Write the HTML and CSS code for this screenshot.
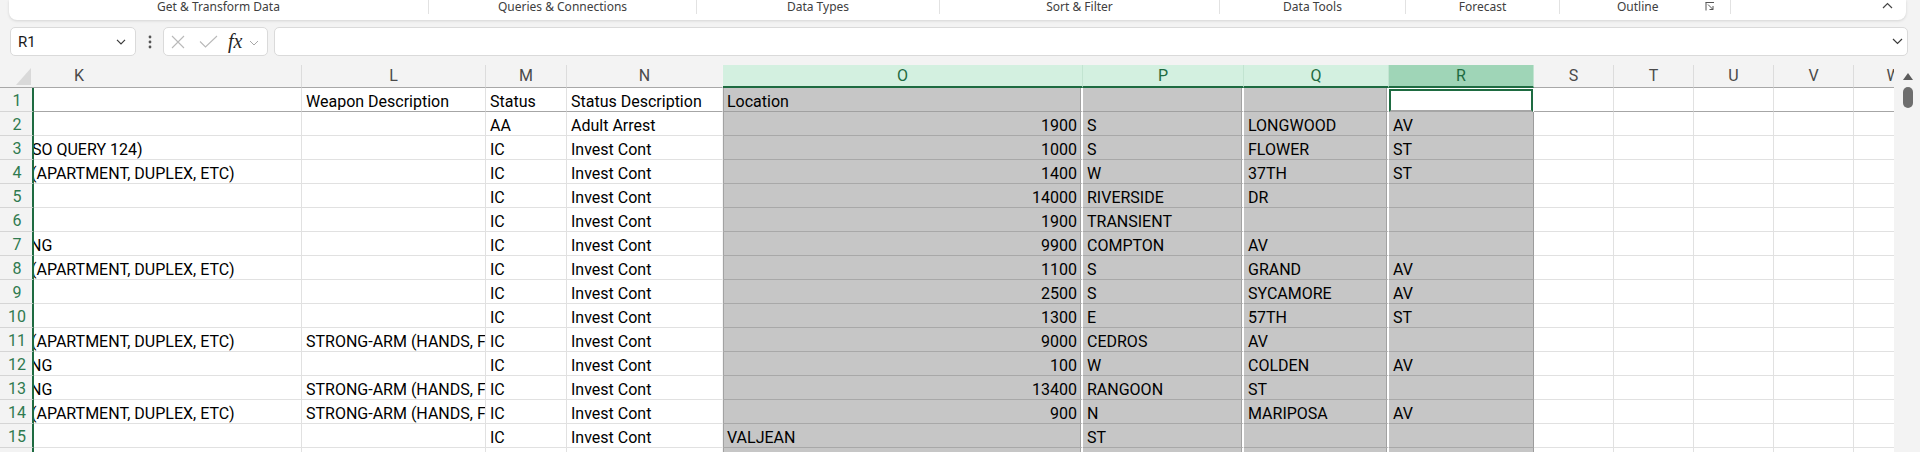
FILE: index.html
```html
<!DOCTYPE html>
<html>
<head>
<meta charset="utf-8">
<link rel="stylesheet" href="styles.css">
</head>
<body>
<div class="ribbon">
  <div class="grp g1">Get &amp; Transform Data</div><div class="sep"></div>
  <div class="grp g2">Queries &amp; Connections</div><div class="sep"></div>
  <div class="grp g3">Data Types</div><div class="sep"></div>
  <div class="grp g4">Sort &amp; Filter</div><div class="sep"></div>
  <div class="grp g5">Data Tools</div><div class="sep"></div>
  <div class="grp g6">Forecast</div><div class="sep"></div>
  <div class="grp g7"><span class="glabel">Outline</span>
    <svg class="launch" width="10" height="10" viewBox="0 0 10 10"><path d="M1 9.5V1.5M0.5 1.5H9M3 3.5L8 8.5M8 5V8.5H4.5" fill="none" stroke="#555" stroke-width="1"/></svg>
  </div><div class="sep"></div>
  <div class="grp g8"><svg width="11" height="7" viewBox="0 0 11 7"><path d="M1 6L5.5 1.5L10 6" fill="none" stroke="#444" stroke-width="1.2"/></svg></div>
</div>

<div class="fbar">
  <div class="namebox"><span>R1</span><svg width="10" height="6" viewBox="0 0 10 6"><path d="M1 0.8L5 4.8L9 0.8" fill="none" stroke="#3a3a3a" stroke-width="1.2"/></svg></div>
  <div class="dots"><svg width="4" height="14" viewBox="0 0 4 14"><circle cx="2" cy="2" r="1.4" fill="#555"/><circle cx="2" cy="7" r="1.4" fill="#555"/><circle cx="2" cy="12" r="1.4" fill="#555"/></svg></div>
  <div class="fxbox">
    <svg class="ix" width="14" height="14" viewBox="0 0 14 14"><path d="M1 1L13 13M13 1L1 13" fill="none" stroke="#b9b9b9" stroke-width="1.1"/></svg>
    <svg class="ic" width="19" height="13" viewBox="0 0 19 13"><path d="M1 6.5L6.5 12L18 1" fill="none" stroke="#b9b9b9" stroke-width="1.1"/></svg>
    <span class="fx">fx</span>
    <svg class="isv" width="10" height="6" viewBox="0 0 10 6"><path d="M1 1L5 5L9 1" fill="none" stroke="#a8a8a8" stroke-width="1"/></svg>
  </div>
  <div class="finput"><svg width="11" height="7" viewBox="0 0 11 7"><path d="M1 1L5.5 5.5L10 1" fill="none" stroke="#3a3a3a" stroke-width="1.2"/></svg></div>
</div>

<div class="sheetwrap">
  <div class="sheet">
    <div class="row hdr">
      <div class="corner"><div class="tri"></div></div>
      <div class="h hk">K</div>
      <div class="h cl">L</div>
      <div class="h cm">M</div>
      <div class="h cn">N</div>
      <div class="h co hs">O</div>
      <div class="h cp hs">P</div>
      <div class="h cq hs">Q</div>
      <div class="h cr hs ha">R</div>
      <div class="h cx">S</div>
      <div class="h cx">T</div>
      <div class="h cx">U</div>
      <div class="h cx">V</div>
      <div class="h cx">W</div>
    </div>

    <div class="row r1">
      <div class="rh">1</div>
      <div class="c ck"></div>
      <div class="c cl">Weapon Description</div>
      <div class="c cm">Status</div>
      <div class="c cn">Status Description</div>
      <div class="c co s">Location</div>
      <div class="c cp s"></div>
      <div class="c cq s"></div>
      <div class="c cr active"></div>
      <div class="c cx"></div><div class="c cx"></div><div class="c cx"></div><div class="c cx"></div><div class="c cx"></div>
    </div>

    <div class="row">
      <div class="rh">2</div>
      <div class="c ck"></div>
      <div class="c cl"></div>
      <div class="c cm">AA</div>
      <div class="c cn">Adult Arrest</div>
      <div class="c co s num">1900</div>
      <div class="c cp s">S</div>
      <div class="c cq s">LONGWOOD</div>
      <div class="c cr s last">AV</div>
      <div class="c cx"></div><div class="c cx"></div><div class="c cx"></div><div class="c cx"></div><div class="c cx"></div>
    </div>

    <div class="row">
      <div class="rh">3</div>
      <div class="c ck"><span class="cut c2">SO QUERY 124)</span></div>
      <div class="c cl"></div>
      <div class="c cm">IC</div>
      <div class="c cn">Invest Cont</div>
      <div class="c co s num">1000</div>
      <div class="c cp s">S</div>
      <div class="c cq s">FLOWER</div>
      <div class="c cr s last">ST</div>
      <div class="c cx"></div><div class="c cx"></div><div class="c cx"></div><div class="c cx"></div><div class="c cx"></div>
    </div>

    <div class="row">
      <div class="rh">4</div>
      <div class="c ck"><span class="cut c3">(APARTMENT, DUPLEX, ETC)</span></div>
      <div class="c cl"></div>
      <div class="c cm">IC</div>
      <div class="c cn">Invest Cont</div>
      <div class="c co s num">1400</div>
      <div class="c cp s">W</div>
      <div class="c cq s">37TH</div>
      <div class="c cr s last">ST</div>
      <div class="c cx"></div><div class="c cx"></div><div class="c cx"></div><div class="c cx"></div><div class="c cx"></div>
    </div>

    <div class="row">
      <div class="rh">5</div>
      <div class="c ck"></div>
      <div class="c cl"></div>
      <div class="c cm">IC</div>
      <div class="c cn">Invest Cont</div>
      <div class="c co s num">14000</div>
      <div class="c cp s">RIVERSIDE</div>
      <div class="c cq s">DR</div>
      <div class="c cr s last"></div>
      <div class="c cx"></div><div class="c cx"></div><div class="c cx"></div><div class="c cx"></div><div class="c cx"></div>
    </div>

    <div class="row">
      <div class="rh">6</div>
      <div class="c ck"></div>
      <div class="c cl"></div>
      <div class="c cm">IC</div>
      <div class="c cn">Invest Cont</div>
      <div class="c co s num">1900</div>
      <div class="c cp s">TRANSIENT</div>
      <div class="c cq s"></div>
      <div class="c cr s last"></div>
      <div class="c cx"></div><div class="c cx"></div><div class="c cx"></div><div class="c cx"></div><div class="c cx"></div>
    </div>

    <div class="row">
      <div class="rh">7</div>
      <div class="c ck"><span class="cut c4">NG</span></div>
      <div class="c cl"></div>
      <div class="c cm">IC</div>
      <div class="c cn">Invest Cont</div>
      <div class="c co s num">9900</div>
      <div class="c cp s">COMPTON</div>
      <div class="c cq s">AV</div>
      <div class="c cr s last"></div>
      <div class="c cx"></div><div class="c cx"></div><div class="c cx"></div><div class="c cx"></div><div class="c cx"></div>
    </div>

    <div class="row">
      <div class="rh">8</div>
      <div class="c ck"><span class="cut c3">(APARTMENT, DUPLEX, ETC)</span></div>
      <div class="c cl"></div>
      <div class="c cm">IC</div>
      <div class="c cn">Invest Cont</div>
      <div class="c co s num">1100</div>
      <div class="c cp s">S</div>
      <div class="c cq s">GRAND</div>
      <div class="c cr s last">AV</div>
      <div class="c cx"></div><div class="c cx"></div><div class="c cx"></div><div class="c cx"></div><div class="c cx"></div>
    </div>

    <div class="row">
      <div class="rh">9</div>
      <div class="c ck"></div>
      <div class="c cl"></div>
      <div class="c cm">IC</div>
      <div class="c cn">Invest Cont</div>
      <div class="c co s num">2500</div>
      <div class="c cp s">S</div>
      <div class="c cq s">SYCAMORE</div>
      <div class="c cr s last">AV</div>
      <div class="c cx"></div><div class="c cx"></div><div class="c cx"></div><div class="c cx"></div><div class="c cx"></div>
    </div>

    <div class="row">
      <div class="rh">10</div>
      <div class="c ck"></div>
      <div class="c cl"></div>
      <div class="c cm">IC</div>
      <div class="c cn">Invest Cont</div>
      <div class="c co s num">1300</div>
      <div class="c cp s">E</div>
      <div class="c cq s">57TH</div>
      <div class="c cr s last">ST</div>
      <div class="c cx"></div><div class="c cx"></div><div class="c cx"></div><div class="c cx"></div><div class="c cx"></div>
    </div>

    <div class="row">
      <div class="rh">11</div>
      <div class="c ck"><span class="cut c3">(APARTMENT, DUPLEX, ETC)</span></div>
      <div class="c cl">STRONG-ARM (HANDS, FIST, FEET OR BODILY FORCE)</div>
      <div class="c cm">IC</div>
      <div class="c cn">Invest Cont</div>
      <div class="c co s num">9000</div>
      <div class="c cp s">CEDROS</div>
      <div class="c cq s">AV</div>
      <div class="c cr s last"></div>
      <div class="c cx"></div><div class="c cx"></div><div class="c cx"></div><div class="c cx"></div><div class="c cx"></div>
    </div>

    <div class="row">
      <div class="rh">12</div>
      <div class="c ck"><span class="cut c4">NG</span></div>
      <div class="c cl"></div>
      <div class="c cm">IC</div>
      <div class="c cn">Invest Cont</div>
      <div class="c co s num">100</div>
      <div class="c cp s">W</div>
      <div class="c cq s">COLDEN</div>
      <div class="c cr s last">AV</div>
      <div class="c cx"></div><div class="c cx"></div><div class="c cx"></div><div class="c cx"></div><div class="c cx"></div>
    </div>

    <div class="row">
      <div class="rh">13</div>
      <div class="c ck"><span class="cut c4">NG</span></div>
      <div class="c cl">STRONG-ARM (HANDS, FIST, FEET OR BODILY FORCE)</div>
      <div class="c cm">IC</div>
      <div class="c cn">Invest Cont</div>
      <div class="c co s num">13400</div>
      <div class="c cp s">RANGOON</div>
      <div class="c cq s">ST</div>
      <div class="c cr s last"></div>
      <div class="c cx"></div><div class="c cx"></div><div class="c cx"></div><div class="c cx"></div><div class="c cx"></div>
    </div>

    <div class="row">
      <div class="rh">14</div>
      <div class="c ck"><span class="cut c3">(APARTMENT, DUPLEX, ETC)</span></div>
      <div class="c cl">STRONG-ARM (HANDS, FIST, FEET OR BODILY FORCE)</div>
      <div class="c cm">IC</div>
      <div class="c cn">Invest Cont</div>
      <div class="c co s num">900</div>
      <div class="c cp s">N</div>
      <div class="c cq s">MARIPOSA</div>
      <div class="c cr s last">AV</div>
      <div class="c cx"></div><div class="c cx"></div><div class="c cx"></div><div class="c cx"></div><div class="c cx"></div>
    </div>

    <div class="row">
      <div class="rh">15</div>
      <div class="c ck"></div>
      <div class="c cl"></div>
      <div class="c cm">IC</div>
      <div class="c cn">Invest Cont</div>
      <div class="c co s">VALJEAN</div>
      <div class="c cp s">ST</div>
      <div class="c cq s"></div>
      <div class="c cr s last"></div>
      <div class="c cx"></div><div class="c cx"></div><div class="c cx"></div><div class="c cx"></div><div class="c cx"></div>
    </div>

    <div class="row">
      <div class="rh">16</div>
      <div class="c ck"></div>
      <div class="c cl"></div>
      <div class="c cm"></div>
      <div class="c cn"></div>
      <div class="c co s"></div>
      <div class="c cp s"></div>
      <div class="c cq s"></div>
      <div class="c cr s last"></div>
      <div class="c cx"></div><div class="c cx"></div><div class="c cx"></div><div class="c cx"></div><div class="c cx"></div>
    </div>
  </div>
  <div class="vscroll">
    <div class="uparrow"></div>
    <div class="thumb"></div>
  </div>
</div>
</body>
</html>
```
FILE: styles.css
```css
* { box-sizing: border-box; }
html, body { margin: 0; padding: 0; }
body {
  width: 1920px;
  height: 452px;
  overflow: hidden;
  background: #f3f3f3;
  font-family: Roboto, "Liberation Sans", sans-serif;
  color: #000;
}

/* Ribbon group labels */
.ribbon {
  display: flex;
  margin: 0 14px 0 9px;
  height: 20px;
  background: #fff;
  border-radius: 0 0 8px 8px;
  box-shadow: 0 1px 3px rgba(0, 0, 0, 0.13);
  font-family: "Noto Sans", "Open Sans", sans-serif;
  font-size: 12px;
  color: #404040;
}
.grp {
  display: flex;
  justify-content: center;
  align-items: flex-start;
  height: 14px;
  line-height: 13px;
  white-space: nowrap;
}
.sep { width: 1px; height: 14px; background: #e2e2e2; }
.g1 { width: 419px; }
.g2 { width: 267px; }
.g3 { width: 242px; }
.g4 { width: 279px; }
.g5 { width: 185px; }
.g6 { width: 153px; }
.g7 { width: 170px; justify-content: flex-start; padding-left: 57px; }
.g7 .launch { margin-left: 46px; margin-top: 1px; }
.g8 { flex: 1; justify-content: flex-end; padding-right: 13px; padding-top: 2px; }

/* Formula bar */
.fbar {
  display: flex;
  height: 29px;
  margin-top: 7px;
  padding-left: 10px;
}
.namebox {
  width: 126px;
  background: #fff;
  border: 1px solid #dadada;
  border-radius: 5px;
  display: flex;
  align-items: center;
  justify-content: space-between;
  padding: 0 9px 0 7px;
  font-family: Roboto, "Liberation Sans", sans-serif;
  font-size: 15px;
  color: #1a1a1a;
}
.dots {
  width: 27px;
  display: flex;
  align-items: center;
  justify-content: center;
}
.fxbox {
  width: 105px;
  background: #fff;
  border: 1px solid #dadada;
  border-radius: 5px;
  display: flex;
  align-items: center;
  padding-left: 7px;
}
.ix { margin-right: 14px; }
.ic { margin-right: 10px; }
.fx {
  font-family: "Liberation Serif", "DejaVu Serif", serif;
  font-style: italic;
  font-size: 20px;
  color: #262626;
  line-height: 20px;
  margin-top: -2px;
}
.isv { margin-left: 7px; margin-top: 3px; }
.finput {
  width: 1634px;
  margin-left: 6px;
  background: #fff;
  border: 1px solid #dadada;
  border-radius: 5px;
  display: flex;
  align-items: center;
  justify-content: flex-end;
  padding-right: 4px;
}

/* Sheet */
.sheetwrap {
  display: flex;
  margin-top: 9px;
  height: 387px;
}
.sheet {
  width: 1894px;
  overflow: hidden;
  background: #fff;
}
.row {
  display: flex;
  height: 24px;
  width: 1974px;
}
.hdr { height: 23px; background: #f3f3f3; }

.corner {
  width: 34px;
  flex: none;
  height: 23px;
  border-bottom: 1px solid #a8a8a8;
  display: flex;
  align-items: flex-end;
  justify-content: flex-end;
  padding: 0 3px 2px 0;
}
.tri {
  width: 15px;
  height: 17px;
  background: #d9d9d9;
  clip-path: polygon(100% 0, 100% 100%, 0 100%);
}

.h {
  flex: none;
  height: 23px;
  border-right: 1px solid #dcdcdc;
  border-bottom: 1px solid #a8a8a8;
  text-align: center;
  font-size: 16px;
  line-height: 22px;
  color: #4a4a4a;
  white-space: nowrap;
  overflow: hidden;
}
.hk { width: 268px; text-align: left; padding-left: 40px; }
.hs {
  background: #d3f0e0;
  color: #1e6b41;
  border-bottom: 2px solid #1e6b41;
  border-right-color: #c2e4d1;
}
.ha { background: #9fd5b7; }

.rh {
  flex: none;
  width: 34px;
  height: 24px;
  background: #f3f3f3;
  border-right: 2px solid #1e6b41;
  border-bottom: 1px solid #d5d5d5;
  text-align: center;
  padding-left: 2px;
  font-size: 16px;
  line-height: 16px;
  padding-top: 5px;
  color: #2f7a4f;
}

.c {
  flex: none;
  height: 24px;
  border-right: 1px solid #e1e1e1;
  border-bottom: 1px solid #e1e1e1;
  padding: 6px 4px 0 4px;
  font-size: 16px;
  line-height: 16px;
  white-space: nowrap;
  overflow: hidden;
  color: #000;
}
.r1 .c { border-bottom-color: #a6a6a6; }

.ck { width: 268px; padding-left: 0; }
.cl { width: 184px; }
.cm { width: 81px; }
.cn { width: 156px; border-right-color: #f4f4f4; }
.co { width: 360px; }
.cp { width: 161px; }
.cq { width: 145px; }
.cr { width: 145px; }
.cx { width: 80px; }

.num { text-align: right; }

.s {
  background: #c6c6c6;
  border-bottom-color: #a8a8a8;
  border-right: 2px solid #fff;
  box-shadow: inset -1px 0 0 #a2a2a2;
}
.r1 .s { border-bottom-color: #a0a0a0; }
.co.s { box-shadow: inset -1px 0 0 #a2a2a2, inset 1px 0 0 #a2a2a2; }
.s.last { border-right: 1px solid #9c9c9c; box-shadow: none; }
.active {
  background: #fff;
  border: 2px solid #1e6b41;
  height: 23px;
  margin-top: 1px;
  margin-right: 1px;
  width: 144px;
}

.cut { display: inline-block; }
.c2 { margin-left: -2px; }
.c3 { margin-left: -3px; }
.c4 { margin-left: -4px; }

.vscroll {
  width: 26px;
  display: flex;
  flex-direction: column;
  align-items: center;
  padding-left: 2px;
}
.uparrow {
  margin-top: 8px;
  width: 0;
  height: 0;
  border-left: 5px solid transparent;
  border-right: 5px solid transparent;
  border-bottom: 7px solid #5c5c5c;
}
.thumb {
  margin-top: 7px;
  width: 10px;
  height: 21px;
  border-radius: 5px;
  background: #6e6e6e;
}
```
